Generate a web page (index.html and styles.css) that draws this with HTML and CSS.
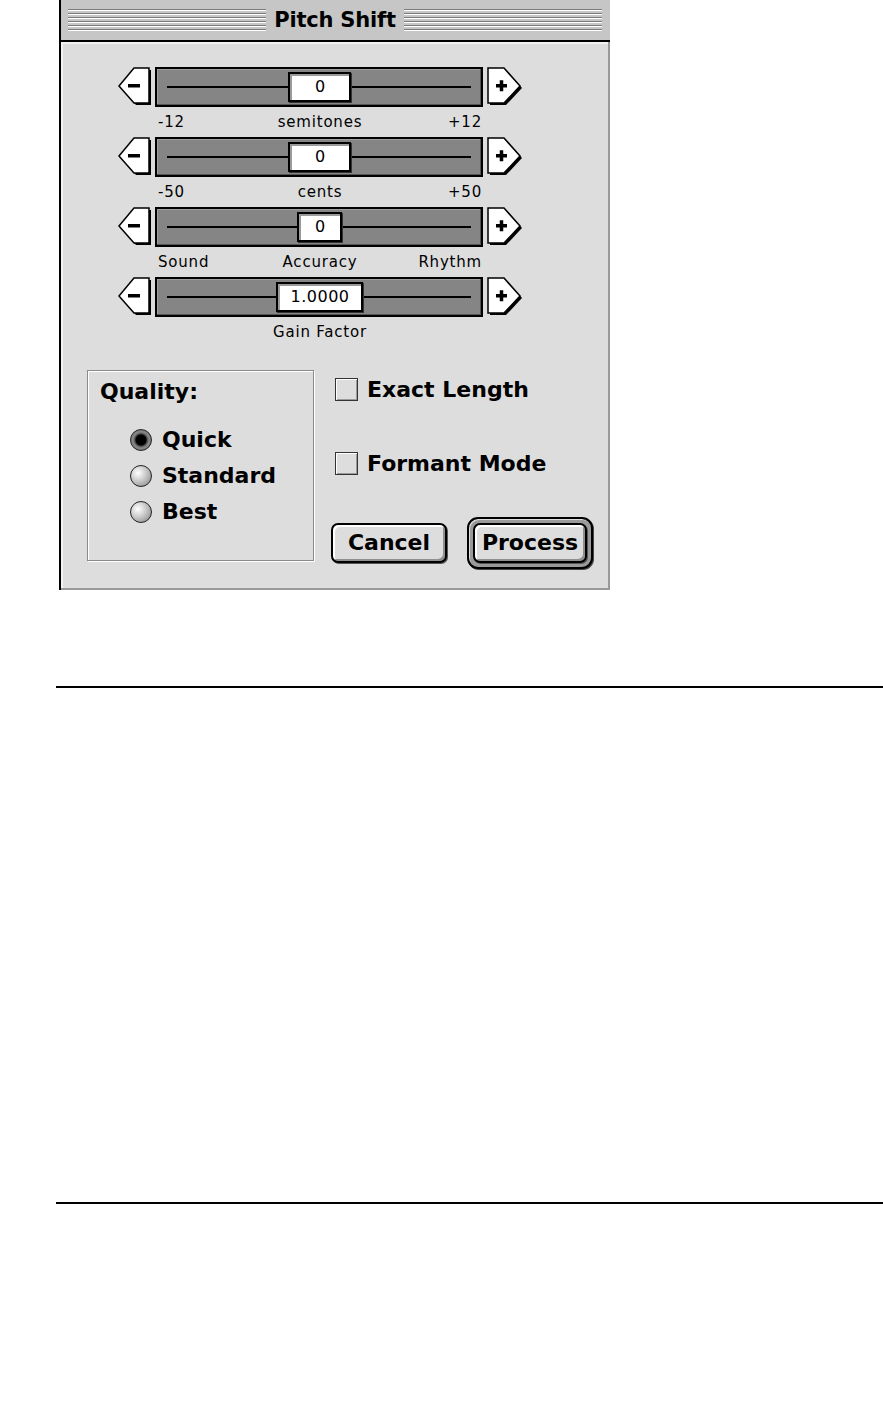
FILE: index.html
```html
<!DOCTYPE html>
<html lang="en">
<head>
  <meta charset="UTF-8">
  <meta name="viewport" content="width=device-width, initial-scale=1.0">
  <title>Pitch Shift</title>
  <link rel="stylesheet" href="styles.css">
</head>
<body>
<div class="window">
  <div class="titlebar">
    <span class="stripes"></span>
    <h1>Pitch Shift</h1>
    <span class="stripes"></span>
  </div>
  <div class="content">
    <div class="sliders">
      <div class="slider">
        <div class="slider-row">
          <svg class="arrow" width="36" height="40" viewBox="0 0 36 40"><polygon points="3,21 18,3 33,3 33,38 18,38" fill="#000"/><polygon points="1,19 16,1 31,1 31,36 16,36" fill="#fff" stroke="#000" stroke-width="1.5"/><rect x="10" y="17" width="12" height="3.5" fill="#000"/></svg>
          <div class="track"><div class="thumb">0</div></div>
          <svg class="arrow" width="36" height="40" viewBox="0 0 36 40"><polygon points="3,3 19,3 35,21 19,38 3,38" fill="#000"/><polygon points="1,1 17,1 33,19 17,36 1,36" fill="#fff" stroke="#000" stroke-width="1.5"/><rect x="9" y="17" width="11" height="3.5" fill="#000"/><rect x="12.75" y="13.25" width="3.5" height="11" fill="#000"/></svg>
        </div>
        <div class="labels"><span>-12</span><span>semitones</span><span>+12</span></div>
      </div>
      <div class="slider">
        <div class="slider-row">
          <svg class="arrow" width="36" height="40" viewBox="0 0 36 40"><polygon points="3,21 18,3 33,3 33,38 18,38" fill="#000"/><polygon points="1,19 16,1 31,1 31,36 16,36" fill="#fff" stroke="#000" stroke-width="1.5"/><rect x="10" y="17" width="12" height="3.5" fill="#000"/></svg>
          <div class="track"><div class="thumb">0</div></div>
          <svg class="arrow" width="36" height="40" viewBox="0 0 36 40"><polygon points="3,3 19,3 35,21 19,38 3,38" fill="#000"/><polygon points="1,1 17,1 33,19 17,36 1,36" fill="#fff" stroke="#000" stroke-width="1.5"/><rect x="9" y="17" width="11" height="3.5" fill="#000"/><rect x="12.75" y="13.25" width="3.5" height="11" fill="#000"/></svg>
        </div>
        <div class="labels"><span>-50</span><span>cents</span><span>+50</span></div>
      </div>
      <div class="slider">
        <div class="slider-row">
          <svg class="arrow" width="36" height="40" viewBox="0 0 36 40"><polygon points="3,21 18,3 33,3 33,38 18,38" fill="#000"/><polygon points="1,19 16,1 31,1 31,36 16,36" fill="#fff" stroke="#000" stroke-width="1.5"/><rect x="10" y="17" width="12" height="3.5" fill="#000"/></svg>
          <div class="track"><div class="thumb thumb-narrow">0</div></div>
          <svg class="arrow" width="36" height="40" viewBox="0 0 36 40"><polygon points="3,3 19,3 35,21 19,38 3,38" fill="#000"/><polygon points="1,1 17,1 33,19 17,36 1,36" fill="#fff" stroke="#000" stroke-width="1.5"/><rect x="9" y="17" width="11" height="3.5" fill="#000"/><rect x="12.75" y="13.25" width="3.5" height="11" fill="#000"/></svg>
        </div>
        <div class="labels"><span>Sound</span><span>Accuracy</span><span>Rhythm</span></div>
      </div>
      <div class="slider">
        <div class="slider-row">
          <svg class="arrow" width="36" height="40" viewBox="0 0 36 40"><polygon points="3,21 18,3 33,3 33,38 18,38" fill="#000"/><polygon points="1,19 16,1 31,1 31,36 16,36" fill="#fff" stroke="#000" stroke-width="1.5"/><rect x="10" y="17" width="12" height="3.5" fill="#000"/></svg>
          <div class="track"><div class="thumb thumb-wide">1.0000</div></div>
          <svg class="arrow" width="36" height="40" viewBox="0 0 36 40"><polygon points="3,3 19,3 35,21 19,38 3,38" fill="#000"/><polygon points="1,1 17,1 33,19 17,36 1,36" fill="#fff" stroke="#000" stroke-width="1.5"/><rect x="9" y="17" width="11" height="3.5" fill="#000"/><rect x="12.75" y="13.25" width="3.5" height="11" fill="#000"/></svg>
        </div>
        <div class="labels labels-single"><span>Gain Factor</span></div>
      </div>
    </div>

    <div class="bottom">
      <div class="quality">
        <div class="quality-title">Quality:</div>
        <div class="radios">
          <div class="radio-row"><span class="radio checked"></span>Quick</div>
          <div class="radio-row"><span class="radio"></span>Standard</div>
          <div class="radio-row"><span class="radio"></span>Best</div>
        </div>
      </div>
      <div class="options">
        <div class="check-row check-first"><span class="checkbox"></span>Exact Length</div>
        <div class="check-row check-second"><span class="checkbox"></span>Formant Mode</div>
        <div class="buttons">
          <button class="btn">Cancel</button>
          <div class="default-ring"><button class="btn">Process</button></div>
        </div>
      </div>
    </div>
  </div>
</div>
<div class="rule rule-first"></div>
<div class="rule rule-second"></div>
</body>
</html>
```

FILE: styles.css
```css
:root{
  --face:#dddddd;
  --title:#c6c6c6;
  --track:#858585;
  --ui:"DejaVu Sans","Liberation Sans",sans-serif;
}
*{box-sizing:border-box;}
body{margin:0;background:#fff;color:#000;font-family:var(--ui);}

.window{margin-left:59px;width:551px;border-left:2px solid #000;}
.titlebar{height:42px;background:var(--title);border-bottom:2px solid #000;display:flex;align-items:center;padding:0 8px 0 7px;}
.stripes{flex:1;height:23px;background:repeating-linear-gradient(to bottom,#7a7a7a 0 1px,#fff 1px 2px,transparent 2px 4px);}
.titlebar h1{margin:0 8px;font-size:21px;font-weight:700;line-height:40px;letter-spacing:-.2px;}

.content{height:548px;background:var(--face);border-right:2px solid #999;border-bottom:2px solid #999;box-shadow:inset 2px 2px 0 #f2f2f2;padding-top:25px;}

.sliders{padding-left:57px;}
.slider-row{display:flex;align-items:flex-start;height:40px;}
.arrow{display:block;flex:none;}
.slider-row .arrow:first-child{margin-right:1px;}
.slider-row .arrow:last-child{margin-left:4px;}
.track{width:328px;height:40px;border:2px solid #000;background:linear-gradient(#000,#000) center/calc(100% - 20px) 2px no-repeat,var(--track);box-shadow:inset -1px -1px 0 #555,inset 1px 1px 0 #a0a0a0;display:flex;align-items:center;justify-content:center;}
.thumb{width:63px;height:30px;background:#fff;border:2px solid #000;box-shadow:inset 2px 2px 0 #9a9a9a,1px 1px 0 #333;font-size:16px;line-height:26px;text-align:center;padding-left:2px;}
.thumb-narrow{width:45px;}
.thumb-wide{width:87px;letter-spacing:.5px;}

.labels{margin-left:37px;width:328px;height:30px;padding:5px 1px 0 3px;display:grid;grid-template-columns:1fr auto 1fr;font-size:15px;line-height:20px;letter-spacing:.8px;}
.labels span:last-child{justify-self:end;}
.labels-single{grid-template-columns:1fr;}
.labels-single span:last-child{justify-self:center;}

.bottom{display:flex;margin-top:23px;padding-left:26px;}
.quality{width:227px;height:191px;border:1px solid #8a8a8a;box-shadow:inset 1px 1px 0 #fff,1px 1px 0 #fff;padding:8px 0 0 12px;font-weight:700;font-size:22px;}
.quality-title{line-height:26px;}
.radios{margin-top:17px;padding-left:30px;}
.radio-row{display:flex;align-items:center;height:36px;line-height:36px;}
.radio{width:22px;height:22px;border-radius:50%;border:1.5px solid #222;background:radial-gradient(circle at 35% 35%,#fff 0,#cfcfcf 40%,#7f7f7f 100%);margin-right:10px;flex:none;}
.radio.checked{background:radial-gradient(circle,#000 0 5px,#444 6px,#8a8a8a 8px,#5a5a5a 100%);}

.options{margin-left:17px;font-weight:700;font-size:22px;}
.check-row{display:flex;align-items:center;height:26px;padding-left:4px;}
.check-first{margin-top:6px;}
.check-second{margin-top:48px;}
.checkbox{width:23px;height:23px;border:1.5px solid #333;background:var(--face);box-shadow:inset 1px 1px 0 #fff,inset -1px -1px 0 #9a9a9a;margin-right:9px;flex:none;}

.buttons{display:flex;align-items:center;gap:20px;margin-top:41px;}
.btn{width:116px;height:40px;border:2px solid #000;border-radius:7px;background:var(--face);box-shadow:inset 2px 2px 0 #fff,inset -2px -2px 0 #8f8f8f,1px 1px 0 #555;font-family:var(--ui);font-weight:700;font-size:22px;color:#000;padding:0;line-height:34px;}
.default-ring{width:126px;height:52px;border:2px solid #000;border-radius:11px;background:#9a9a9a;box-shadow:inset 1px 1px 0 #ddd,1px 1px 0 #444;padding:4px;}
.default-ring .btn{width:114px;}

.rule{margin-left:56px;height:2px;background:#000;}
.rule-first{margin-top:96px;}
.rule-second{margin-top:514px;}
```
